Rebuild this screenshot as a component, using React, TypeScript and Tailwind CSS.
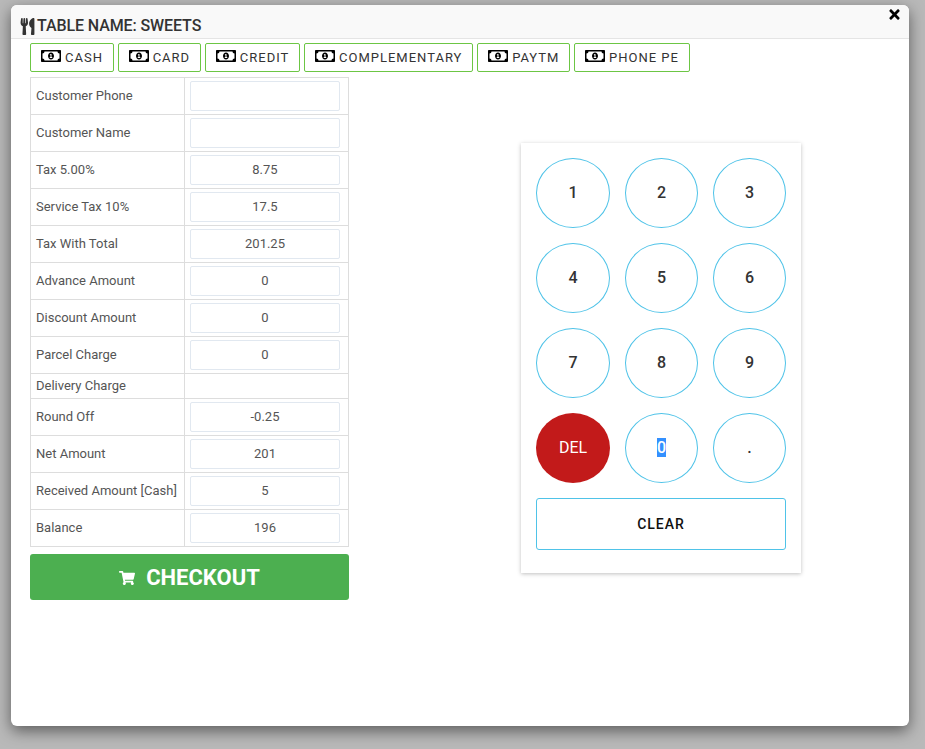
import React from "react";
import { FaRegMoneyBillAlt, FaUtensils, FaShoppingCart, FaTimes } from "react-icons/fa";

const payments = ["CASH", "CARD", "CREDIT", "COMPLEMENTARY", "PAYTM", "PHONE PE"];

const rows: { label: string; value?: string; noInput?: boolean }[] = [
  { label: "Customer Phone", value: "" },
  { label: "Customer Name", value: "" },
  { label: "Tax 5.00%", value: "8.75" },
  { label: "Service Tax 10%", value: "17.5" },
  { label: "Tax With Total", value: "201.25" },
  { label: "Advance Amount", value: "0" },
  { label: "Discount Amount", value: "0" },
  { label: "Parcel Charge", value: "0" },
  { label: "Delivery Charge", noInput: true },
  { label: "Round Off", value: "-0.25" },
  { label: "Net Amount", value: "201" },
  { label: "Received Amount [Cash]", value: "5" },
  { label: "Balance", value: "196" },
];

const keys = ["1", "2", "3", "4", "5", "6", "7", "8", "9"];

const App = () => {
  return (
    <div className="h-[749px] w-[925px] overflow-hidden bg-[#b9b9b9] pt-[5px] pl-[11px] font-['Roboto',sans-serif]">
      {/* --- MODAL --- */}
      <div className="relative h-[721px] w-[898px] rounded-[6px] bg-white shadow-[0_5px_15px_rgba(0,0,0,0.5)]">
        <div className="flex h-[34px] items-center rounded-t-[6px] border-b border-[#e5e5e5] bg-[#f9f9f9] pl-[8px] pt-[9px] text-[#333]">
          <FaUtensils size={17} />
          <span className="ml-[1px] text-[16px] font-medium leading-none tracking-[-0.1px]">TABLE NAME: SWEETS</span>
        </div>
        <button className="absolute top-[2px] right-[7px] text-black">
          <FaTimes size={15} />
        </button>

        {/* --- PAYMENT BUTTONS --- */}
        <div className="flex gap-[3.7px] pt-[4px] pl-[19px]">
          {payments.map((p) => (
            <button
              key={p}
              className="flex h-[29px] items-center gap-[4px] rounded-[2px] border border-[#6cc644] bg-white pr-[10px] pl-[10px] text-[13px] tracking-[1px] text-[#333]"
            >
              <FaRegMoneyBillAlt size={20} className="-mt-[3px] text-black" />
              {p}
            </button>
          ))}
        </div>

        <div className="flex pt-[5px] pl-[19px]">
          {/* --- BILL TABLE --- */}
          <div className="w-[319px]">
            <table className="w-[319px] table-fixed border-collapse text-[13px] text-[#555]">
              <colgroup>
                <col className="w-[154px]" />
                <col />
              </colgroup>
              <tbody>
                {rows.map((r) => (
                  <tr key={r.label} className={r.noInput ? "h-[25px]" : "h-[37px]"}>
                    <td className="border border-[#ddd] pl-[5px] pb-[1px]">{r.label}</td>
                    <td className="border border-[#ddd] px-[5px]">
                      {!r.noInput && (
                        <input
                          readOnly
                          value={r.value}
                          className="block h-[30px] w-[150px] rounded-[2px] border border-[#e1e8f0] bg-white pb-[1px] text-center text-[13px] text-[#555] outline-none"
                        />
                      )}
                    </td>
                  </tr>
                ))}
              </tbody>
            </table>
            <button className="mt-[7px] flex h-[46px] w-[319px] items-center justify-center gap-[11px] rounded-[3px] bg-[#4caf50] pt-[1px] text-[22px] font-bold leading-none text-white">
              <FaShoppingCart size={16} />
              CHECKOUT
            </button>
          </div>

          {/* --- NUMPAD --- */}
          <div className="mt-[66px] ml-[172px] h-[430px] w-[280px] bg-white px-[15px] pt-[15px] shadow-[0_1px_4px_rgba(0,0,0,0.25)]">
            <div className="grid grid-cols-[74px_73px_73px] gap-x-[15px] gap-y-[15px]">
              {keys.map((k) => (
                <button
                  key={k}
                  className="h-[70px] rounded-[50%] border border-[#4fc3e8] bg-white text-[16px] font-medium text-[#333]"
                >
                  {k}
                </button>
              ))}
              <button className="h-[70px] rounded-[50%] bg-[#c21a1a] text-[16px] text-white">DEL</button>
              <button className="h-[70px] rounded-[50%] border border-[#4fc3e8] bg-white text-[16px] font-medium">
                <span className="bg-[#3390ff] text-white">0</span>
              </button>
              <button className="h-[70px] rounded-[50%] border border-[#4fc3e8] bg-white text-[16px] font-medium text-[#333]">.</button>
            </div>
            <button className="mt-[15px] h-[52px] w-[250px] rounded-[3px] border border-[#4fc3e8] bg-white text-[14px] font-medium tracking-[1px] text-[#111]">
              CLEAR
            </button>
          </div>
        </div>
      </div>
    </div>
  );
};

export default App;
